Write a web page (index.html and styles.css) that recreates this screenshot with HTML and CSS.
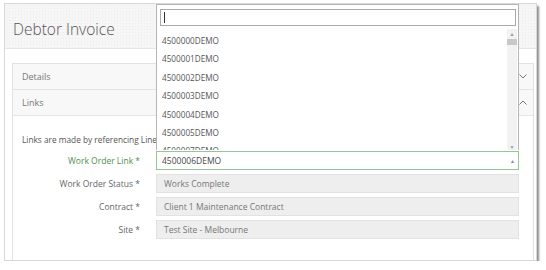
FILE: index.html
```html
<!DOCTYPE html>
<html lang="en">
<head>
    <meta charset="UTF-8">
    <title>Debtor Invoice</title>
    <link rel="stylesheet" href="styles.css">
</head>
<body>
    <div class="window">
        <header class="page-head">
            <h1>Debtor Invoice</h1>
        </header>

        <div class="content">
            <div class="panel">
                <div class="panel-row">
                    <span>Details</span>
                    <svg class="chev" width="8" height="5" viewBox="0 0 8 5"><path d="M0.5 0.5 L4 4 L7.5 0.5" fill="none" stroke="#777" stroke-width="1"/></svg>
                </div>
                <div class="panel-row">
                    <span>Links</span>
                    <svg class="chev" width="8" height="5" viewBox="0 0 8 5"><path d="M0.5 4.5 L4 1 L7.5 4.5" fill="none" stroke="#777" stroke-width="1"/></svg>
                </div>
                <div class="panel-body">
                    <p class="intro">Links are made by referencing Line Items from other records.</p>
                    <div class="form-grid">
                        <label class="active">Work Order Link *</label>
                        <div class="field select-open">
                            <span>4500006DEMO</span>
                            <span class="arrow">&#9650;</span>
                        </div>
                        <label>Work Order Status *</label>
                        <div class="field readonly">Works Complete</div>
                        <label>Contract *</label>
                        <div class="field readonly">Client 1 Maintenance Contract</div>
                        <label>Site *</label>
                        <div class="field readonly">Test Site - Melbourne</div>
                    </div>
                </div>
            </div>
        </div>
    </div>

    <!-- open dropdown of the Work Order Link select -->
    <div class="dropdown">
        <div class="search"><span class="caret"></span></div>
        <div class="results">
            <ul class="options">
                <li>4500000DEMO</li>
                <li>4500001DEMO</li>
                <li>4500002DEMO</li>
                <li>4500003DEMO</li>
                <li>4500004DEMO</li>
                <li>4500005DEMO</li>
                <li>4500007DEMO</li>
                <li>4500008DEMO</li>
            </ul>
            <div class="scrollbar">
                <span class="sb-up">&#9650;</span>
                <span class="sb-thumb"></span>
                <span class="sb-down">&#9660;</span>
            </div>
        </div>
    </div>
</body>
</html>
```

FILE: styles.css
```css
body {
    margin: 0;
    padding: 0;
    background: #fff;
    font-family: 'Open Sans', 'Noto Sans', sans-serif;
    color: #666;
}

.window {
    margin: 3px 0 0 4px;
    width: 531px;
    height: 256px;
    border: 1px solid #d8d8d8;
    background: #fff;
    box-shadow: 2px 3px 2px rgba(0, 0, 0, 0.45);
    overflow: hidden;
}

.page-head {
    height: 44px;
    background-color: #f6f6f6;
    background-image: radial-gradient(#ececec 0.6px, transparent 0.7px);
    background-size: 3px 3px;
    border-bottom: 1px solid #e6e6e6;
    display: flex;
    align-items: center;
    padding-left: 8px;
}

.page-head h1 {
    margin: 6px 0 0;
    font-size: 15.5px;
    font-weight: 300;
    color: #555;
}

.content {
    padding: 14px 2px 0 7px;
}

.panel {
    border: 1px solid #e2e2e2;
    height: 202px;
}

.panel-row {
    height: 25px;
    display: flex;
    align-items: center;
    justify-content: space-between;
    padding: 0 6px 0 9px;
    font-size: 9px;
    color: #777;
    background: #f8f8f8;
    border-bottom: 1px solid #e4e4e4;
}

.chev {
    display: block;
}

.panel-body {
    padding: 18px 0 0 9px;
}

.intro {
    margin: 0 0 6px;
    font-size: 8.3px;
    color: #555;
    white-space: nowrap;
}

.form-grid {
    display: grid;
    grid-template-columns: 118px 363px;
    column-gap: 16px;
    row-gap: 4px;
    align-items: center;
}

.form-grid label {
    text-align: right;
    font-size: 8.5px;
    color: #666;
}

.form-grid label.active {
    color: #4f8f4f;
}

.field {
    box-sizing: border-box;
    height: 19px;
    display: flex;
    align-items: center;
    font-size: 8.5px;
    padding-left: 7px;
}

.select-open {
    border: 1px solid #95c795;
    background: #fff;
    color: #444;
    justify-content: space-between;
    padding-left: 5px;
    padding-right: 3px;
}

.select-open .arrow {
    font-size: 5px;
    color: #888;
}

.readonly {
    background: #eeeeee;
    border: 1px solid #e2e2e2;
    color: #777;
}

.dropdown {
    position: absolute;
    left: 156px;
    top: 4px;
    width: 363px;
    height: 146px;
    box-sizing: border-box;
    border: 1px solid #b5b5b5;
    border-bottom: none;
    background: #fff;
    overflow: hidden;
}

.search {
    margin: 4px 2px 0 3px;
    height: 17px;
    box-sizing: border-box;
    border: 1px solid #aaa;
    display: flex;
    align-items: center;
    padding-left: 3px;
}

.caret {
    width: 1px;
    height: 11px;
    background: #333;
}

.results {
    display: flex;
    height: 124px;
    margin-top: 3px;
}

.options {
    list-style: none;
    margin: 0;
    padding: 3px 0 0;
    flex: 1;
}

.options li {
    height: 18.4px;
    line-height: 18.4px;
    padding-left: 5px;
    font-size: 8.2px;
    color: #555;
}

.scrollbar {
    width: 10px;
    margin-right: 1px;
    background: #f2f2f2;
    display: flex;
    flex-direction: column;
    align-items: center;
}

.sb-up, .sb-down {
    font-size: 5px;
    color: #999;
    line-height: 10px;
}

.sb-thumb {
    width: 10px;
    height: 6px;
    background: #c8c8c8;
}

.sb-down {
    margin-top: auto;
    margin-bottom: 1px;
}
```
